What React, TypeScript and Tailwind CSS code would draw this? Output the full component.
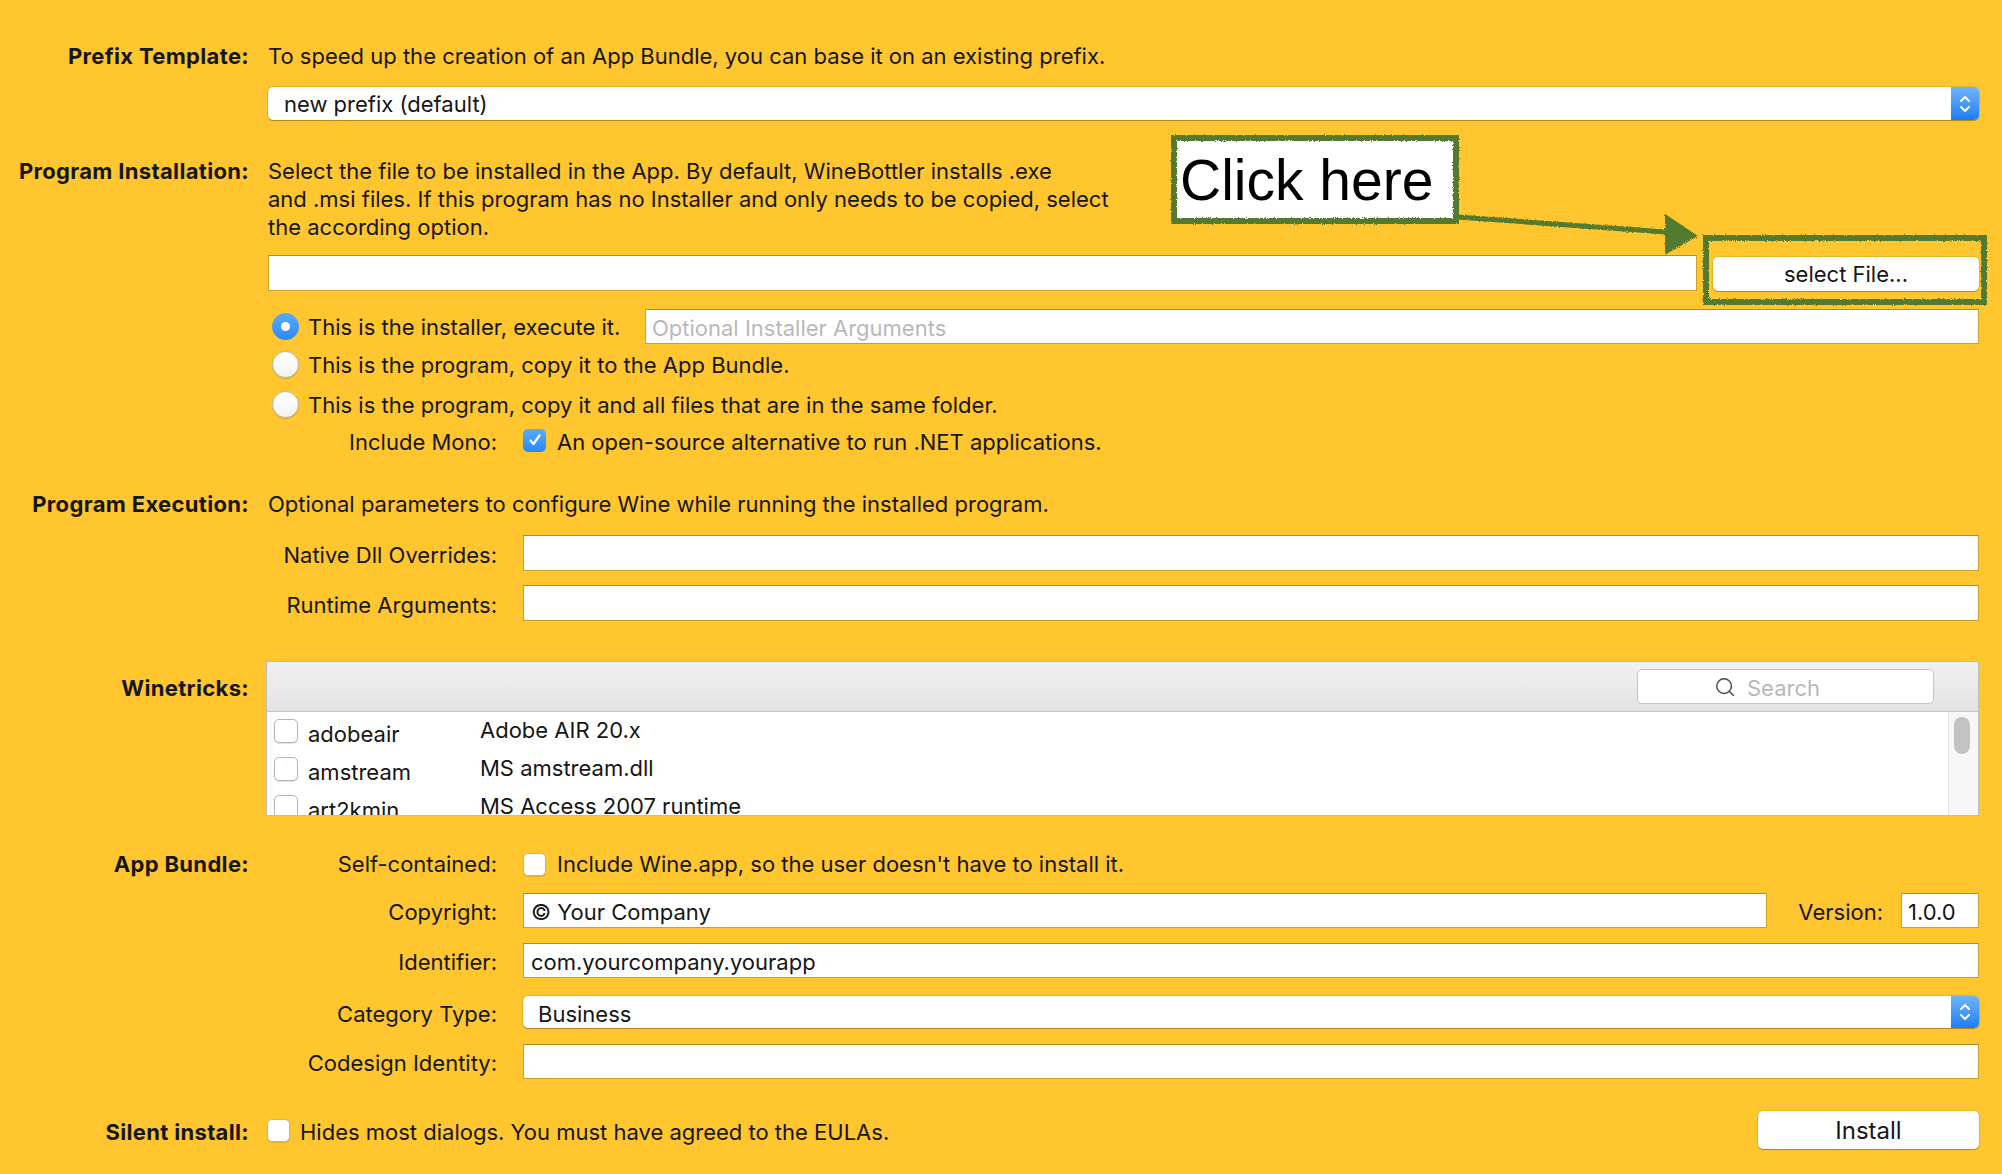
import { Search } from 'lucide-react';

const sectionLabel = 'w-[249px] shrink-0 text-right font-bold tracking-[0.015em]';
const subLabel = 'w-[229px] shrink-0 text-right';
const inputBox = 'border border-[#cf9f26] border-t-[#b88a1a] bg-white';

function Stepper() {
  return (
    <div className="ml-auto flex h-full w-[28px] items-center justify-center rounded-r-[5px] bg-gradient-to-b from-[#6db4fb] to-[#1a7df6]">
      <svg width="14" height="22" viewBox="0 0 14 22" fill="none" stroke="white" strokeWidth="2" strokeLinecap="round" strokeLinejoin="round">
        <path d="M3 8 L7 4 L11 8" />
        <path d="M3 14 L7 18 L11 14" />
      </svg>
    </div>
  );
}

function Select({ value, height, pad }: { value: string; height: string; pad: string }) {
  return (
    <div className={`flex ${height} items-center rounded-[5px] bg-white shadow-[0_1px_1px_rgba(120,80,0,0.45),0_0_0_1px_rgba(160,120,20,0.25)]`}>
      <span className={pad}>{value}</span>
      <Stepper />
    </div>
  );
}

function Radio({ checked }: { checked?: boolean }) {
  if (checked) {
    return (
      <div className="flex h-[27px] w-[27px] shrink-0 items-center justify-center rounded-full bg-gradient-to-b from-[#5aabfc] to-[#2a8af5]">
        <div className="h-[9px] w-[9px] rounded-full bg-white" />
      </div>
    );
  }
  return <div className="h-[27px] w-[27px] shrink-0 rounded-full border border-[#b7b7b7] bg-gradient-to-b from-white to-[#f3f3f3] shadow-[0_1px_1px_rgba(0,0,0,0.15)]" />;
}

function Checkbox({ checked, size = 'h-[23px] w-[23px]' }: { checked?: boolean; size?: string }) {
  if (checked) {
    return (
      <div className={`flex ${size} shrink-0 items-center justify-center rounded-[5px] bg-gradient-to-b from-[#5aabfc] to-[#2a87f4]`}>
        <svg width="14" height="14" viewBox="0 0 14 14" fill="none" stroke="white" strokeWidth="2.2" strokeLinecap="round" strokeLinejoin="round">
          <path d="M2.5 7.5 L5.5 11 L11.5 2.5" />
        </svg>
      </div>
    );
  }
  return <div className={`${size} shrink-0 rounded-[5px] border border-[#b5b5b5] bg-white shadow-[0_1px_1px_rgba(0,0,0,0.12)]`} />;
}

const tricks = [
  { name: 'adobeair', desc: 'Adobe AIR 20.x' },
  { name: 'amstream', desc: 'MS amstream.dll' },
  { name: 'art2kmin', desc: 'MS Access 2007 runtime' },
];

export default function App() {
  return (
    <div className="relative h-[1174px] w-[2002px] overflow-hidden bg-[#ffc62f] font-['Inter',sans-serif] text-[22px] leading-[28px] text-[#161616]">
      {/* Prefix Template */}
      <div className="flex pt-[42px]">
        <div className={sectionLabel}>Prefix Template:</div>
        <div className="ml-[19px] w-[1711px]">
          <div>To speed up the creation of an App Bundle, you can base it on an existing prefix.</div>
          <div className="mt-[17px]">
            <Select value="new prefix (default)" height="h-[33px]" pad="pl-[16px]" />
          </div>
        </div>
      </div>

      {/* Program Installation */}
      <div className="mt-[37px] flex">
        <div className={sectionLabel}>Program Installation:</div>
        <div className="ml-[19px] w-[1711px]">
          <div>
            Select the file to be installed in the App. By default, WineBottler installs .exe
            <br />
            and .msi files. If this program has no Installer and only needs to be copied, select
            <br />
            the according option.
          </div>
          <div className="mt-[14px] flex h-[36px] items-start">
            <div className={`h-[36px] w-[1429px] ${inputBox}`} />
            <button className="ml-[16px] mt-[2px] h-[34px] flex-1 rounded-[5px] bg-white text-center shadow-[0_1px_1px_rgba(120,80,0,0.45),0_0_0_1px_rgba(160,120,20,0.2)]">
              select File...
            </button>
          </div>
          <div className="mt-[18px] flex h-[35px] items-center">
            <div className="ml-[4px]"><Radio checked /></div>
            <span className="ml-[9px] pt-[1px]">This is the installer, execute it.</span>
            <div className={`ml-auto flex h-[35px] w-[1334px] items-center pl-[6px] pt-[2px] text-[#b9b9b9] ${inputBox}`}>Optional Installer Arguments</div>
          </div>
          <div className="flex h-[40px] items-center">
            <div className="ml-[4px]"><Radio /></div>
            <span className="ml-[9px] pt-[2px]">This is the program, copy it to the App Bundle.</span>
          </div>
          <div className="flex h-[40px] items-center">
            <div className="ml-[4px]"><Radio /></div>
            <span className="ml-[9px] pt-[2px]">This is the program, copy it and all files that are in the same folder.</span>
          </div>
          <div className="flex h-[32px] items-center">
            <div className={`${subLabel} pt-[3px]`}>Include Mono:</div>
            <div className="ml-[26px]"><Checkbox checked /></div>
            <span className="ml-[11px] pt-[3px]">An open-source alternative to run .NET applications.</span>
          </div>
        </div>
      </div>

      {/* Program Execution */}
      <div className="mt-[34px] flex">
        <div className={sectionLabel}>Program Execution:</div>
        <div className="ml-[19px] w-[1711px]">
          <div>Optional parameters to configure Wine while running the installed program.</div>
          <div className="mt-[17px] flex h-[36px] items-center">
            <div className={`${subLabel} pt-[3px]`}>Native Dll Overrides:</div>
            <div className={`ml-[26px] h-[36px] flex-1 ${inputBox}`} />
          </div>
          <div className="mt-[14px] flex h-[36px] items-center">
            <div className={`${subLabel} pt-[3px]`}>Runtime Arguments:</div>
            <div className={`ml-[26px] h-[36px] flex-1 ${inputBox}`} />
          </div>
        </div>
      </div>

      {/* Winetricks */}
      <div className="mt-[40px] flex">
        <div className={`${sectionLabel} pt-[13px]`}>Winetricks:</div>
        <div className="ml-[17px] flex h-[155px] w-[1713px] flex-col border border-[#bdbdbd] bg-white">
          <div className="flex h-[50px] shrink-0 items-center border-b border-[#c6c6c6] bg-gradient-to-b from-[#f1f1f1] to-[#e3e3e3]">
            <div className="ml-auto mr-[44px] flex h-[35px] w-[297px] items-center rounded-[5px] border border-[#c4c4c4] bg-white pl-[76px]">
              <Search size={22} strokeWidth={1.6} className="text-[#4a4a4a]" />
              <span className="ml-[11px] pt-[2px] text-[#b8b8b8]">Search</span>
            </div>
          </div>
          <div className="flex min-h-0 flex-1">
            <div className="flex-1 overflow-hidden">
              {tricks.map((t) => (
                <div key={t.name} className="flex h-[38px] items-center">
                  <div className="ml-[7px]"><Checkbox size="h-[24px] w-[24px]" /></div>
                  <span className="ml-[10px] w-[172px] pt-[6px]">{t.name}</span>
                  <span className="pb-[2px]">{t.desc}</span>
                </div>
              ))}
            </div>
            <div className="w-[30px] shrink-0 border-l border-[#e6e6e6] bg-[#f7f7f7] pl-[5px] pt-[5px]">
              <div className="h-[37px] w-[16px] rounded-full bg-[#c2c2c2]" />
            </div>
          </div>
        </div>
      </div>

      {/* App Bundle */}
      <div className="mt-[34px] flex">
        <div className={sectionLabel}>App Bundle:</div>
        <div className="ml-[19px] w-[1711px]">
          <div className="flex h-[28px] items-center">
            <div className={subLabel}>Self-contained:</div>
            <div className="ml-[26px]"><Checkbox /></div>
            <span className="ml-[11px]">Include Wine.app, so the user doesn't have to install it.</span>
          </div>
          <div className="mt-[15px] flex h-[35px] items-center">
            <div className={`${subLabel} pt-[3px]`}>Copyright:</div>
            <div className={`ml-[26px] flex h-[35px] w-[1244px] items-center pl-[7px] pt-[3px] ${inputBox}`}>© Your Company</div>
            <div className="ml-auto pt-[3px]">Version:</div>
            <div className={`ml-[18px] flex h-[35px] w-[78px] items-center pl-[6px] pt-[3px] ${inputBox}`}>1.0.0</div>
          </div>
          <div className="mt-[15px] flex h-[35px] items-center">
            <div className={`${subLabel} pt-[3px]`}>Identifier:</div>
            <div className={`ml-[26px] flex h-[35px] flex-1 items-center pl-[7px] pt-[3px] ${inputBox}`}>com.yourcompany.yourapp</div>
          </div>
          <div className="mt-[18px] flex h-[32px] items-center">
            <div className={`${subLabel} pt-[3px]`}>Category Type:</div>
            <div className="ml-[26px] flex-1">
              <Select value="Business" height="h-[32px]" pad="pl-[15px] pt-[3px]" />
            </div>
          </div>
          <div className="mt-[16px] flex h-[35px] items-center">
            <div className={`${subLabel} pt-[3px]`}>Codesign Identity:</div>
            <div className={`ml-[26px] h-[35px] flex-1 ${inputBox}`} />
          </div>
        </div>
      </div>

      {/* Silent install */}
      <div className="mt-[32px] flex h-[38px] items-center">
        <div className={`${sectionLabel} pt-[3px]`}>Silent install:</div>
        <div className="ml-[18px] flex w-[1712px] items-center">
          <Checkbox />
          <span className="ml-[10px] pt-[3px]">Hides most dialogs. You must have agreed to the EULAs.</span>
          <button className="ml-auto h-[38px] w-[221px] rounded-[5px] bg-white pt-[2px] text-[24px] shadow-[0_1px_1px_rgba(120,80,0,0.45),0_0_0_1px_rgba(160,120,20,0.2)]">
            Install
          </button>
        </div>
      </div>

      {/* Annotation overlay */}
      <svg className="pointer-events-none absolute left-[1160px] top-[125px]" width="840" height="190" viewBox="0 0 840 190">
        <defs>
          <filter id="rough" x="-5%" y="-5%" width="110%" height="110%">
            <feTurbulence type="fractalNoise" baseFrequency="0.9" numOctaves="2" seed="3" result="n" />
            <feDisplacementMap in="SourceGraphic" in2="n" scale="3" />
          </filter>
        </defs>
        <g filter="url(#rough)">
          <rect x="14" y="13" width="282" height="83" fill="white" stroke="#527a2d" strokeWidth="6" />
          <path d="M297 92 L506 107" stroke="#527a2d" strokeWidth="5" fill="none" />
          <polygon points="505,89 538,111 505,130" fill="#527a2d" />
          <rect x="546" y="113" width="278" height="64" fill="none" stroke="#527a2d" strokeWidth="6" />
        </g>
      </svg>
      <div className="pointer-events-none absolute left-[1180px] top-[146px] font-['Liberation_Sans',Arial,sans-serif] text-[57px] leading-[68px] text-black">
        Click here
      </div>
    </div>
  );
}
